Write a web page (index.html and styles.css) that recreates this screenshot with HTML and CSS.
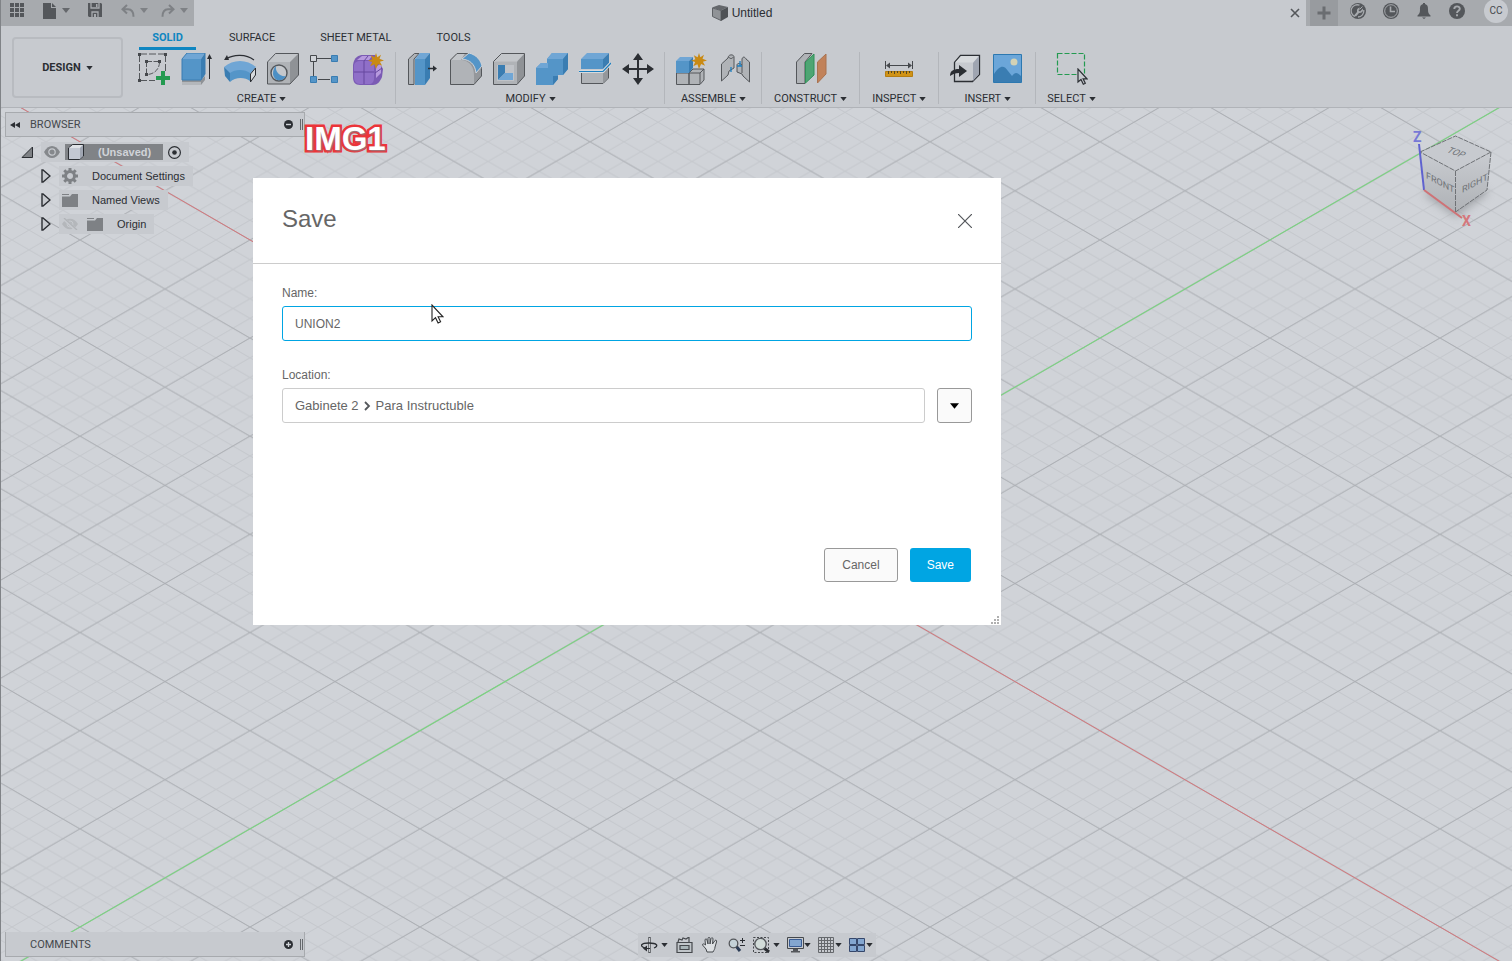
FILE: index.html
```html
<!DOCTYPE html>
<html lang="en">
  <head>
    <meta charset="UTF-8" />
    <meta name="viewport" content="width=device-width,initial-scale=1.0" />
    <title>Untitled</title>
    <link rel="stylesheet" href="styles.css">
  </head>
  <body>
    <!-- shared shapes -->
    <svg class="defs" aria-hidden="true">
      <symbol id="caret" viewBox="0 0 8 5"><path d="M0 0h8L4 5z" fill="currentColor"/></symbol>
      <symbol id="star" viewBox="0 0 16 16"><path d="M8 0l1.400 4.200 3.600-2.400-1.500 4L16 7.600l-4.100 1.200 2.200 4-4-1.800L8 16l-1.600-4.800-4.200 2 2-4.200L0 7.800l4.400-1.600-1.600-4 3.800 2z" fill="#c98a14"/></symbol>
      <symbol id="folder" viewBox="0 0 16 13"><path d="M0 0h7v1H0zM0 2.500h8L10 0h6v13H0z" fill="#7e8185"/></symbol>
      <symbol id="expand" viewBox="0 0 10 14"><path d="M1 1h1l7 6-7 6H1z" fill="#c7cacf" stroke="#2b2e33" stroke-width="1.400"/></symbol>
      <symbol id="pointer" viewBox="0 0 13 20"><path d="M1 1v16l3.500-3.300 2.600 5.300 2.500-1.200-2.500-5H12z" fill="#fff" stroke="#222" stroke-width="1.100"/></symbol>
      <symbol id="pointer-grey" viewBox="0 0 11 17"><path d="M1 1v13l3-2.500 2.300 4.700 2-1-2.200-4.400H10z" fill="#c7cacf" stroke="#2b2e33" stroke-width="1.200"/></symbol>
    </svg>

    <div class="app">
      <header>
        <div class="titlebar">
          <div class="quick">
            <button aria-label="Data panel"><svg width="15" height="15" viewBox="0 0 15 15" fill="#54575b"><path d="M0 0h4v4H0zM5 0h4v4H5zM10 0h4v4h-4zM0 5h4v4H0zM5 5h4v4H5zM10 5h4v4h-4zM0 10h4v4H0zM5 10h4v4H5zM10 10h4v4h-4z"/></svg></button>
            <button class="with-caret" aria-label="File">
              <svg width="14" height="16" viewBox="0 0 14 16" fill="#54575b"><path d="M0 0h8v5h5v11H0zM9 0l4 4H9z"/></svg>
              <svg class="caret"><use href="#caret"/></svg>
            </button>
            <button aria-label="Save file"><svg width="15" height="15" viewBox="0 0 15 15"><path d="M0 0h13l1 1v13H1l-1-1z" fill="#54575b"/><path d="M3 0v5h8V0M4 14V9h6v5" fill="none" stroke="#a7aaae" stroke-width="1.300"/><path d="M6 11h2v3H6zM8 1h1.500v3H8z" fill="#a7aaae"/></svg></button>
            <div class="history">
              <button class="with-caret" aria-label="Undo">
                <svg width="14" height="14" viewBox="0 0 14 14" fill="none" stroke="#7e8185" stroke-width="2"><path d="M6 1L1.500 5.200 6 9.500M2 5.200h5c3.500 0 5.500 2 5.500 7.500"/></svg>
                <svg class="caret"><use href="#caret"/></svg>
              </button>
              <button class="with-caret" aria-label="Redo">
                <svg width="14" height="14" viewBox="0 0 14 14" fill="none" stroke="#7e8185" stroke-width="2"><path d="M8 1l4.500 4.200L8 9.500M12 5.200H7c-3.500 0-5.500 2-5.500 7.500"/></svg>
                <svg class="caret"><use href="#caret"/></svg>
              </button>
            </div>
          </div>
          <div class="doc-tab">
            <h1>
              <svg width="16" height="16" viewBox="0 0 16 16"><path d="M0 2.500L7 0l9 2-7 3.500z" fill="#65686c"/><path d="M.5 3L9 5.500v10l-8.500-4z" fill="#909397" stroke="#5f6266"/><path d="M9 5.500L16 2v10l-7 4z" fill="#4e5155"/></svg>
              Untitled
            </h1>
            <button aria-label="Close tab"><svg width="10" height="10" viewBox="0 0 10 10" stroke="#54575b" stroke-width="1.600"><path d="M1 1l8 8M9 1L1 9"/></svg></button>
          </div>
          <div class="account">
            <button class="new-tab" aria-label="New tab"><svg width="14" height="14" viewBox="0 0 14 14" fill="#6a6d71"><path d="M5.500 0.500h3v5H13.500v3H8.500v5h-3v-5H0.500v-3h5z"/></svg></button>
            <button aria-label="Extensions"><svg width="16" height="16" viewBox="0 0 16 16"><circle cx="8" cy="8" r="8" fill="#54575b"/><path d="M5 13.500a6 6 0 1 1 4.500-11.300M13.700 7A6 6 0 0 1 8 14" fill="none" stroke="#a7aaae" stroke-width="1.300"/><path d="M4 12.500l3-3.500c-.5-3 1-4 3-4.500L8.500 7.500l1.500 1L13 5.500c.5 3-1 4.500-4 4.500l-3 3.500z" fill="#a7aaae"/><path d="M9.500 6.500l3-3" stroke="#a7aaae"/></svg></button>
            <button aria-label="Job status"><svg width="16" height="16" viewBox="0 0 16 16"><circle cx="8" cy="8" r="8" fill="#54575b"/><circle cx="8" cy="8" r="6.300" fill="none" stroke="#a7aaae"/><path d="M7.500 3.500v5h4.500" fill="none" stroke="#a7aaae" stroke-width="1.600"/></svg></button>
            <button aria-label="Notifications"><svg width="16" height="16" viewBox="0 0 16 16" fill="#54575b"><path d="M7 0h2v1c3 1 3 3 3 5.500 0 3 .5 4.500 2.500 6v1h-13v-1C3.500 11 4 9.500 4 6.500 4 4 4 2 7 1zM6 14.500h4L8 16z"/></svg></button>
            <button aria-label="Help"><svg width="16" height="16" viewBox="0 0 16 16"><circle cx="8" cy="8" r="8" fill="#54575b"/><path d="M5.300 6c0-3.500 5.500-3.500 5.500-.2C10.800 7.800 8 7.800 8 10M8 11.200v2" fill="none" stroke="#a7aaae" stroke-width="1.900"/></svg></button>
            <button class="avatar">CC</button>
          </div>
        </div>

        <div class="ribbon">
          <button class="workspace-btn">DESIGN <svg class="caret small"><use href="#caret"/></svg></button>
          <div class="ribbon-body">
            <nav class="tabs">
              <a href="#" class="active">SOLID</a>
              <a href="#">SURFACE</a>
              <a href="#">SHEET METAL</a>
              <a href="#">TOOLS</a>
            </nav>
            <div class="groups">
              <section class="group">
                <div class="icons">
                  <button aria-label="Create Sketch"><svg viewBox="0 0 32 32"><path d="M2 1h25M1.500 2v25M27.500 2v16M2 27.500h15" fill="none" stroke="#54575b" stroke-dasharray="7 2"/><path d="M9 8.500h12M8.500 9v13M21.500 9c0 7-5 12-12 12.500" fill="none" stroke="#54575b" stroke-dasharray="5 1.500"/><path d="M0 0h3v3H0zM26 0h3v3h-3zM0 26h3v3H0zM7 7h3v3H7zM20 7h3v3h-3zM7 20h3v3H7z" fill="#45484c"/><path d="M23 18h4v5h5v4h-5v5h-4v-5h-5v-4h5z" fill="#239a50"/></svg></button>
                  <button aria-label="Extrude"><svg viewBox="0 0 32 32"><path d="M1 27h19l4-4v4l-4 5H1z" fill="#8f9296"/><path d="M1 29h19v3H1z" fill="#b4b7bb"/><path d="M1 6l5-6h18l-4 6z" fill="#70a6d5"/><path d="M20 6l4-6v21l-4 6z" fill="#3a7db2"/><path d="M1 6h19v21H1z" fill="#5495c8"/><path d="M1 6l5-6h18v21l-4 6H1z" fill="none" stroke="#3a7db2"/><path d="M28.500 3v23" stroke="#2b2e33"/><path d="M26 6l2.500-5L31 6z" fill="#2b2e33"/></svg></button>
                  <button aria-label="Revolve"><svg viewBox="0 0 32 32"><path d="M0 14c9-8 23-8 32 0l-6 7c-6-4-14-4-20 0z" fill="#70a6d5"/><path d="M0 14l6 6v9l-5-6z" fill="#3a7db2"/><path d="M6 20c5-4 15-4 20 0v8c-5-4-15-4-20 1z" fill="#5495c8"/><path d="M26.500 21l5-6v7l-5 7z" fill="#d7dadd" stroke="#2b2e33"/><path d="M2 6c8-5 20-5 28 1" fill="none" stroke="#2b2e33" stroke-width="1.200"/><path d="M0 7l3-5 2 5z" fill="#2b2e33"/></svg></button>
                  <button aria-label="Hole"><svg viewBox="0 0 32 32"><path d="M.5 9l8-8.500h23L23 9z" fill="#c3c6ca"/><path d="M23 9l8.500-8.500V22L23 31z" fill="#8f9296"/><path d="M.5 9H23v22H.5z" fill="#b0b3b7"/><path d="M.5 9l8-8.500h23V22L23 31H.5z" fill="none" stroke="#54575b"/><circle cx="12" cy="20" r="8" fill="#c5c8cc" stroke="#54575b" stroke-width="1.400"/><path d="M9 13c-1 6 4 11 10 10-3 6-12 6-13-2 0-4 1-6 3-8z" fill="#4c8fc4"/></svg></button>
                  <button aria-label="Rectangular Pattern"><svg viewBox="0 0 32 32"><path d="M7 5.500h14M3.500 9v14M8 26.500h12" stroke="#45484c"/><path d="M.5 2.500h6v6h-6z" fill="#d0d3d8" stroke="#45484c"/><path d="M21.500 2.500h6v6h-6zM.5 23.500h6v6h-6zM21.500 23.500h6v6h-6z" fill="#5495c8" stroke="#3a7db2"/></svg></button>
                  <button aria-label="Create Form"><svg viewBox="0 0 32 32"><path d="M0 12C1 4 6 2 10 2h12l8 14-1 8c-2 5-5 8-9 8H7c-5 0-7-3-7-8z" fill="#7b5bb4"/><path d="M1 12c1-3 3-4 6-4h10c3 0 4 3 4 6v11c0 4-2 6-5 6H7c-4 0-6-3-6-7z" fill="#8f6fc8"/><path d="M4 7l5-4h10l-3 4zM23 14l5-4v10l-5 5z" fill="#b79ade"/><path d="M11 8v23M1 19h20M11 8l4-5M22 20l7-5" fill="none" stroke="#67489f"/><use href="#star" x="15" y="0" width="16" height="16"/></svg></button>
                </div>
                <button class="group-name">CREATE <svg class="caret small"><use href="#caret"/></svg></button>
              </section>
              <section class="group">
                <div class="icons">
                  <button aria-label="Press Pull"><svg viewBox="0 0 32 32"><path d="M1.500 6l6-5.500H12L7 6v25.500H1.500z" fill="#b0b3b7" stroke="#54575b"/><path d="M8 6l5-6h10l-5 6z" fill="#70a6d5"/><path d="M18 6l5-6v25l-5 7z" fill="#3a7db2"/><path d="M8 6h10v26H8z" fill="#5495c8"/><path d="M21 15.500h6" stroke="#2b2e33" stroke-width="1.500"/><path d="M26 12.500l4 3-4 3z" fill="#2b2e33"/></svg></button>
                  <button aria-label="Fillet"><svg viewBox="0 0 32 32"><path d="M.5 7L7 .5h10c8 1 14 7 14.500 15V23L24 31.500H.5z" fill="#94979b"/><path d="M.5 7H12c8 1 12 7 12 16v8.500H.5z" fill="#b0b3b7"/><path d="M1 7l6-6.500h8L11 7z" fill="#c3c6ca"/><path d="M.5 7L7 .5h10c8 1 14 7 14.500 15V23L24 31.500H.5z" fill="none" stroke="#54575b"/><path d="M12 6l7-6c8 2 12 8 13 13l-6 7C25 11 20 7 12 6z" fill="#5495c8" stroke="#d0d3d8"/></svg></button>
                  <button aria-label="Shell"><svg viewBox="0 0 32 32"><path d="M.5 8.500l8-8h23L24 8.500z" fill="#c3c6ca"/><path d="M24 8.500l7.500-8V23L24 31.500z" fill="#8f9296"/><path d="M.5 8.500H24v23H.5z" fill="#b0b3b7"/><path d="M.5 8.500l8-8h23V23L24 31.500H.5z" fill="none" stroke="#54575b"/><path d="M4 12h17v16H4z" fill="#c0c3c8"/><path d="M5 12h7v8l-7 7z" fill="#3a7db2"/><path d="M5 27l7-7h8v7z" fill="#70a6d5"/></svg></button>
                  <button aria-label="Combine"><svg viewBox="0 0 32 32"><path d="M0 15l5-5h6V6l5-6h16v16l-5 6h-5v4l-5 6H0z" fill="#5495c8"/><path d="M11 6l5-6h16l-5 6zM0 15l5-5h7v5z" fill="#70a6d5"/><path d="M27 6l5-6v16l-5 6zM17 23h5v3l-5 6z" fill="#3a7db2"/></svg></button>
                  <button aria-label="Split Body"><svg viewBox="0 0 32 32"><path d="M2.500 19.500H24l5.500-5V25L24 30.500H2.500z" fill="#b0b3b7" stroke="#54575b"/><path d="M24 20l5-5v10l-5 5z" fill="#94979b"/><path d="M2 6l6-6h22l-6 6z" fill="#70a6d5"/><path d="M24 6l6-6v10l-6 6z" fill="#3a7db2"/><path d="M2 6h22v10H2z" fill="#5495c8"/><path d="M0 18.500h24L32 10" fill="none" stroke="#d7dadd" stroke-width="3"/><path d="M0 18.500h24L32 10" fill="none" stroke="#1c7fc0" stroke-width="1.200"/></svg></button>
                  <button aria-label="Move/Copy"><svg viewBox="0 0 32 32" fill="#2b2e33"><path d="M16 0l5 7h-4v8h8v-4l7 5-7 5v-4h-8v8h4l-5 7-5-7h4v-8H7v4l-7-5 7-5v4h8V7h-4z"/></svg></button>
                </div>
                <button class="group-name">MODIFY <svg class="caret small"><use href="#caret"/></svg></button>
              </section>
              <section class="group">
                <div class="icons">
                  <button aria-label="New Component"><svg viewBox="0 0 32 32"><path d="M.5 20H13v11.500H.5zM13 20l4-4h11v11l-4 4.500H13z" fill="#b0b3b7" stroke="#54575b"/><path d="M13 20h11v11M24 20l4-4" fill="none" stroke="#54575b"/><path d="M0 8l4-4h13L13 8z" fill="#70a6d5"/><path d="M13 8l4-4v11l-4 5z" fill="#3a7db2"/><path d="M0 8h13v12H0z" fill="#5495c8"/><use href="#star" x="15" y="0" width="16" height="16"/></svg></button>
                  <button aria-label="Joint"><svg viewBox="0 0 32 32"><path d="M2.500 11L9 5c0-4 6-4 6-1v11l-5 3-1 4-6.500 6zM30.500 29L24 23l-1-2-5-2v-7c0-2 3-2 5 0V6c1-3 3-2 4 0l3.500 3z" fill="#b0b3b7" stroke="#54575b"/><path d="M10 4c0 2 4 2 4 0M23 12v8" fill="none" stroke="#54575b"/><path d="M12 14v5M21 8v5M18 13h5" stroke="#1c7fc0" stroke-width="1.300"/></svg></button>
                </div>
                <button class="group-name">ASSEMBLE <svg class="caret small"><use href="#caret"/></svg></button>
              </section>
              <section class="group single">
                <div class="icons">
                  <button aria-label="Offset Plane"><svg viewBox="0 0 32 32"><path d="M1.500 9l8-8.500H17L10 9v21.500H1.500z" fill="#b0b3b7" stroke="#54575b"/><path d="M10.500 9L19 1v21l-8.500 8z" fill="#4ea573" stroke="#2f9158"/><path d="M22.500 9L31 1v20l-8.500 9z" fill="#c1825a" stroke="#a97250"/></svg></button>
                </div>
                <button class="group-name">CONSTRUCT <svg class="caret small"><use href="#caret"/></svg></button>
              </section>
              <section class="group single">
                <div class="icons">
                  <button aria-label="Measure"><svg viewBox="0 0 32 32"><path d="M2.500 8v8M29.500 8v8M4 12.500h24" stroke="#45484c"/><path d="M3 12.500l4-3v6zM29 12.500l-4-3v6z" fill="#45484c"/><path d="M2.500 18.500h27v5h-27z" fill="#d09316" stroke="#b57d10"/><path d="M5.500 18v3M8.500 18v2M11.500 18v3M14.500 18v2M17.500 18v3M20.500 18v2M23.500 18v3M26.500 18v2" stroke="#54471f"/></svg></button>
                </div>
                <button class="group-name">INSPECT <svg class="caret small"><use href="#caret"/></svg></button>
              </section>
              <section class="group">
                <div class="icons">
                  <button aria-label="Insert Derive"><svg viewBox="0 0 32 32"><path d="M4.500 9.500l6-7h19v19l-7 7h-18z" fill="#c7cacf" stroke="#2b2e33" stroke-width="1.300"/><path d="M5 9.500l6-6.500h18l-6 6.500z" fill="#d7dadd"/><path d="M23 10l6-7v18l-6 7z" fill="#9fa5b1"/><path d="M0 23c0-5 3-7 9-7v-4l8 6-8 6v-4c-4 0-6 1-9 3z" fill="#2b2e33"/></svg></button>
                  <button aria-label="Decal"><svg viewBox="0 0 32 32"><path d="M.5 1.500h28v28H.5z" fill="#6ba6d9" stroke="#2c78b0"/><path d="M1 21c6-9 10-9 14-3l4 5c3-4 5-4 9 0v6H1z" fill="#3a7db2"/><circle cx="21" cy="9" r="3.500" fill="#d3d2b5"/></svg></button>
                </div>
                <button class="group-name">INSERT <svg class="caret small"><use href="#caret"/></svg></button>
              </section>
              <section class="group">
                <div class="icons">
                  <button aria-label="Select"><svg viewBox="0 0 32 32"><path d="M1.500.500h27v21h-27z" fill="none" stroke="#239a50" stroke-width="1.200" stroke-dasharray="5 2"/><use href="#pointer-grey" x="21" y="15" width="11" height="17"/></svg></button>
                </div>
                <button class="group-name">SELECT <svg class="caret small"><use href="#caret"/></svg></button>
              </section>
            </div>
          </div>
        </div>
      </header>

      <main>
        <svg class="canvas" aria-hidden="true">
          <defs>
            <!-- one cell of the isometric ground grid, five steps a side -->
            <pattern id="grid" patternUnits="userSpaceOnUse" x="79" y="33.770" width="170" height="98.150">
              <g fill="none" stroke="#c5c8cd" stroke-width="1">
                <path d="M-34 -19.630L204 117.780M0 -19.630L204 98.150M34 -19.630L204 78.520M68 -19.630L204 58.890M102 -19.630L204 39.260M136 -19.630L204 19.630M-34 0L170 117.780M-34 19.630L136 117.780M-34 39.260L102 117.780M-34 58.890L68 117.780M-34 78.520L34 117.780"/>
                <path d="M204 -19.630L-34 117.780M170 -19.630L-34 98.150M136 -19.630L-34 78.520M102 -19.630L-34 58.890M68 -19.630L-34 39.260M34 -19.630L-34 19.630M204 0L0 117.780M204 19.630L34 117.780M204 39.260L68 117.780M204 58.890L102 117.780M204 78.520L136 117.780"/>
              </g>
              <path d="M-34 -19.630L204 117.780M204 -19.630L-34 117.780" fill="none" stroke="#abaeb3" stroke-width="1"/>
            </pattern>
          </defs>
          <rect width="100%" height="100%" fill="url(#grid)"/>
          <path d="M-1 -12.400L2999 1719.700" stroke="#d5777c" stroke-width="1"/>
          <path d="M-1 865.200L1999 -289.500" stroke="#7bd480" stroke-width="1.100"/>
        </svg>

        <aside class="browser">
          <div class="panel-bar">
            <svg width="10" height="6" viewBox="0 0 10 6" fill="#2b2e33"><path d="M5 0v6L0 3zM10 0v6L5 3z"/></svg>
            <span>BROWSER</span>
            <button aria-label="Collapse browser"><svg width="9" height="9" viewBox="0 0 9 9"><circle cx="4.500" cy="4.500" r="4.500" fill="#2b2e33"/><path d="M2 4.500h5" stroke="#d0d3d8" stroke-width="1.400"/></svg></button>
            <i class="grip"></i>
          </div>
          <ul class="tree">
            <li class="root">
              <svg width="12" height="12" viewBox="0 0 12 12"><path d="M1 11.500L11.500 1v10.500z" fill="#7e8185" stroke="#2b2e33"/></svg>
              <div class="chip">
                <svg width="16" height="12" viewBox="0 0 16 12"><path d="M0 6c4-8 12-8 16 0-4 8-12 8-16 0z" fill="#85888c"/><circle cx="8" cy="6" r="3.200" fill="none" stroke="#c7cacf" stroke-width="1.200"/></svg>
                <strong>
                  <svg width="16" height="16" viewBox="0 0 16 16"><path d="M.5 4l4-3.500h11V12l-4 3.500H.5z" fill="#c3c8d2" stroke="#2b2e33"/><path d="M1 4l4-3h10l-3 3z" fill="#dfe2e6"/><path d="M12 4l3-3v11l-3 3z" fill="#a0a6b2"/></svg>
                  (Unsaved)
                </strong>
                <svg width="13" height="13" viewBox="0 0 13 13"><circle cx="6.500" cy="6.500" r="5.900" fill="none" stroke="#2b2e33" stroke-width="1.200"/><circle cx="6.500" cy="6.500" r="2.300" fill="#2b2e33"/></svg>
              </div>
            </li>
            <li>
              <svg width="10" height="14"><use href="#expand"/></svg>
              <div class="chip">
                <svg width="16" height="16" viewBox="0 0 16 16"><circle cx="8" cy="8" r="4.500" fill="none" stroke="#7e8185" stroke-width="3"/><path d="M8 0v3M8 13v3M0 8h3M13 8h3M2.300 2.300l2.200 2.200M11.500 11.500l2.200 2.200M13.700 2.300l-2.200 2.200M4.500 11.500l-2.200 2.200" stroke="#7e8185" stroke-width="3"/></svg>
                <span>Document Settings</span>
              </div>
            </li>
            <li>
              <svg width="10" height="14"><use href="#expand"/></svg>
              <div class="chip">
                <svg width="16" height="13"><use href="#folder"/></svg>
                <span>Named Views</span>
              </div>
            </li>
            <li>
              <svg width="10" height="14"><use href="#expand"/></svg>
              <div class="chip hidden-item">
                <svg width="16" height="12" viewBox="0 0 16 12"><path d="M0 6c4-7 12-7 16 0-4 7-12 7-16 0z" fill="#b4b7bb"/><circle cx="8" cy="6" r="3" fill="none" stroke="#c7cacf"/><path d="M1 0l13 12" stroke="#c7cacf" stroke-width="3"/><path d="M2 0l13 12" stroke="#b0b3b7" stroke-width="1.300"/></svg>
                <svg width="16" height="13"><use href="#folder"/></svg>
                <span>Origin</span>
              </div>
            </li>
          </ul>
        </aside>

        <p class="stamp">IMG1</p>

        <svg class="viewcube" width="86" height="106" viewBox="0 0 86 106">
          <defs>
            <filter id="soft" x="-50%" y="-50%" width="200%" height="200%"><feGaussianBlur stdDeviation="4"/></filter>
            <linearGradient id="side" x1="0" y1="0" x2="0" y2="1"><stop offset="0" stop-color="#c9ccd1"/><stop offset="1" stop-color="#afb2b6"/></linearGradient>
          </defs>
          <path d="M14 66l33-14 34 12-34 25z" fill="#85888c" opacity=".6" filter="url(#soft)"/>
          <path d="M11 24L46.500 8 82 24 46.500 43z" fill="#c7cacf"/>
          <path d="M11 24l35.500 19v41L15 62z" fill="url(#side)"/>
          <path d="M82 24L46.500 43v41L78 62z" fill="url(#side)"/>
          <path d="M11 24L46.500 8 82 24 46.500 43zM46.500 43v41M82 24l-4 38-31.500 22" fill="none" stroke="#6f7276" stroke-dasharray="5 1"/>
          <path d="M10 16l5 46" stroke="#5f62cf" stroke-width="2"/>
          <path d="M15 62l38 28" stroke="#cf7276" stroke-width="2"/>
          <text x="4" y="14" class="axis-z">Z</text>
          <text x="53" y="98" class="axis-x">X</text>
          <text class="face" transform="translate(17 50) skewY(28)">FRONT</text>
          <text class="face" transform="translate(53 65) skewY(-28)">RIGHT</text>
          <text class="face" transform="translate(37 24) rotate(20) skewX(-25)">TOP</text>
        </svg>

        <dialog open aria-labelledby="dialog-title">
          <form>
            <div class="dialog-head">
              <h2 id="dialog-title">Save</h2>
              <button type="button" class="close" aria-label="Close"><svg width="14" height="14" viewBox="0 0 14 14" stroke="#54575b" stroke-width="1.200"><path d="M0 0l14 14M14 0L0 14"/></svg></button>
            </div>
            <div class="dialog-body">
              <label for="name">Name:</label>
              <input type="text" id="name" name="name" value="UNION2">
              <label for="location">Location:</label>
              <div class="location">
                <output id="location">Gabinete 2 <svg width="7" height="10" viewBox="0 0 7 10" fill="none" stroke="#54575b" stroke-width="1.800"><path d="M1 1l4 4-4 4"/></svg> Para Instructuble</output>
                <button type="button" class="drop" aria-label="Choose location"><svg width="9" height="6"><use href="#caret"/></svg></button>
              </div>
              <div class="buttons">
                <button type="button" class="cancel">Cancel</button>
                <button type="submit" class="save">Save</button>
              </div>
            </div>
          </form>
          <svg class="resize" width="9" height="9" viewBox="0 0 9 9" fill="#b0b0b0"><path d="M6 0h2v2H6zM3 3h2v2H3zM6 3h2v2H6zM0 6h2v2H0zM3 6h2v2H3zM6 6h2v2H6z"/></svg>
        </dialog>
        <svg class="mouse" width="13" height="20" aria-hidden="true"><use href="#pointer"/></svg>

        <div class="panel-bar comments">
          <span>COMMENTS</span>
          <button aria-label="Add comment"><svg width="9" height="9" viewBox="0 0 9 9"><circle cx="4.500" cy="4.500" r="4.500" fill="#2b2e33"/><path d="M2 4.500h5M4.500 2v5" stroke="#d0d3d8" stroke-width="1.300"/></svg></button>
          <i class="grip"></i>
        </div>

        <div class="navbar">
          <button aria-label="Orbit"><svg width="17" height="16" viewBox="0 0 17 16"><path d="M8.500 0v16" stroke="#54575b" stroke-width="2.500"/><path d="M8.500 1v14" stroke="#c7cacf"/><path d="M4 11C-2 9 0 6 8 6s10 3 5 5" fill="none" stroke="#2b2e33" stroke-width="1.300"/><path d="M2 11.500l4-3v6zM6 11h3v1H6z" fill="#2b2e33"/></svg><svg class="caret small"><use href="#caret"/></svg></button>
          <button class="plain" aria-label="Look At"><svg width="17" height="16" viewBox="0 0 17 16" fill="none" stroke="#45484c" stroke-width="1.200"><path d="M1 5.500h15v10H1z" fill="#c0c5c9"/><path d="M4 8.500h9v4H4z" fill="#a9b5b8"/><path d="M2 5l1-3 3 1 1-2 3 1 3-2v5"/></svg></button>
          <button class="plain" aria-label="Pan"><svg width="17" height="16" viewBox="0 0 17 16"><path d="M5 15l-1-3-3.500-4c0-1.500 1.500-1.500 3 0L3 3c0-1.500 2-1.500 2 0l1 4V1.500c0-1.500 2-1.500 2 0V7l1-5.500c.5-1.200 2-1 2 .5L10.500 7 13 3.500c1-.8 2 0 1.500 1.500L13 10c0 2-1 3-2 5z" fill="#dde0e3" stroke="#45484c"/></svg></button>
          <button class="plain" aria-label="Zoom"><svg width="17" height="16" viewBox="0 0 17 16"><path d="M8 9l4 5" stroke="#2b3c55" stroke-width="3"/><circle cx="5.500" cy="6.500" r="4.300" fill="#c5d2d8" stroke="#54575b" stroke-width="1.300"/><path d="M14.500 1v5M12 3.500h5M12 8.500h5" stroke="#2b2e33"/></svg></button>
          <button aria-label="Zoom window"><svg width="17" height="16" viewBox="0 0 17 16"><path d="M.5.500h15v15H.5z" fill="none" stroke="#45484c" stroke-dasharray="2 1.500"/><path d="M11 11l5 4" stroke="#2b2e33" stroke-width="3"/><circle cx="7.500" cy="7" r="5.700" fill="#d2dcd9" stroke="#54575b" stroke-width="1.300"/></svg><svg class="caret small"><use href="#caret"/></svg></button>
          <button class="tight" aria-label="Display settings"><svg width="17" height="16" viewBox="0 0 17 16"><path d="M.5.500h16v11H.5z" fill="#c7cacf" stroke="#45484c"/><path d="M2.500 2.500h12v7h-12z" fill="#83a6d0" stroke="#395c94"/><path d="M6 12h5v2h2v1.500H4V14h2z" fill="#54575b"/></svg><svg class="caret small"><use href="#caret"/></svg></button>
          <button class="tight" aria-label="Grid and snaps"><svg width="17" height="16" viewBox="0 0 17 16" fill="none" stroke="#65686c"><path d="M.5.500h15v15H.5zM3.500 0v16M6.500 0v16M9.500 0v16M12.500 0v16M0 3.500h16M0 6.500h16M0 9.500h16M0 12.500h16"/></svg><svg class="caret small"><use href="#caret"/></svg></button>
          <button class="tight" aria-label="Viewports"><svg width="17" height="16" viewBox="0 0 17 16" fill="#83a6d0" stroke="#35476b"><path d="M.5 1.500h7v6h-7zM8.500 1.500h7v6h-7zM.5 8.500h7v6h-7zM8.500 8.500h7v6h-7z"/></svg><svg class="caret small"><use href="#caret"/></svg></button>
        </div>
      </main>
    </div>
  </body>
</html>
```
FILE: styles.css
```css
* {
  box-sizing: border-box;
}
body {
  margin: 0;
  font-family: "Liberation Sans", Arial, sans-serif;
  font-size: 12px;
  color: #2b2e33;
}
button {
  display: flex;
  align-items: center;
  justify-content: center;
  padding: 0;
  border: none;
  background: none;
  font-family: inherit;
  font-size: inherit;
  color: inherit;
  cursor: pointer;
}
svg {
  display: block;
  flex: none;
}
.defs {
  position: absolute;
  width: 0;
  height: 0;
}
.app {
  display: flex;
  flex-direction: column;
  height: 100vh;
  border-left: 1px solid #808387;
  overflow: hidden;
}
.caret {
  width: 8px;
  height: 5px;
}
.caret.small {
  width: 7px;
  height: 4px;
}

/* title bar */
header {
  background: #c7cacf;
  border-bottom: 1px solid #b0b3b8;
}
.titlebar {
  display: flex;
  height: 26px;
}
.quick, .account {
  display: flex;
  align-items: center;
  background: #a7aaae;
  color: #65686c;
  padding-bottom: 5px;
}
.quick {
  gap: 18px;
  padding-left: 9px;
  padding-right: 6px;
}
.history {
  display: flex;
  gap: 13px;
  color: #7e8185;
}
.with-caret {
  gap: 5px;
}
.doc-tab {
  flex: 1;
  display: flex;
  align-items: center;
  padding-right: 6px;
}
.doc-tab h1 {
  flex: 1;
  display: flex;
  align-items: center;
  justify-content: center;
  gap: 4px;
  margin: 0;
  font-size: 12px;
  font-weight: normal;
}
.account {
  gap: 17px;
  padding-left: 4px;
  padding-right: 4px;
}
.new-tab {
  width: 28px;
  height: 26px;
  margin-right: -5px;
  margin-bottom: -5px;
  background: #989b9f;
}
.avatar {
  width: 24px;
  height: 24px;
  border-radius: 50%;
  background: #c7cacf;
  margin-left: 2px;
  font-family: Roboto, sans-serif;
  font-size: 10px;
  color: #45484c;
}

/* ribbon */
.ribbon {
  display: flex;
  height: 81px;
  padding: 0 11px;
  gap: 15px;
  font-family: Roboto, sans-serif;
  font-size: 11px;
}
.workspace-btn {
  width: 111px;
  height: 61px;
  margin-top: 11px;
  gap: 5px;
  border: 2px solid #b8bbc0;
  border-radius: 4px;
  font-weight: bold;
}
.tabs {
  display: flex;
  gap: 33px;
  height: 24px;
}
.tabs a {
  color: #2b2e33;
  text-decoration: none;
  line-height: 24px;
}
.tabs .active {
  color: #0f86c1;
  font-weight: bold;
  width: 57px;
  margin-left: 1px;
  text-align: center;
  border-bottom: 3px solid #0f86c1;
}
.tabs a + a {
  margin-right: 12px;
}
.groups {
  display: flex;
  padding-top: 2px;
}
.group {
  display: flex;
  flex-direction: column;
  align-items: center;
  height: 52px;
  padding: 1px 10px 0 11px;
  border-right: 1px solid #b3b6bb;
}
.group:first-child {
  padding-left: 0;
}
.group:last-child {
  border-right: none;
}
.group.single {
  padding: 1px 12px 0;
}
.icons {
  display: flex;
  gap: 11px;
}
.icons svg {
  width: 32px;
  height: 32px;
}
.group-name {
  gap: 3px;
  height: 14px;
  margin-top: 7px;
}

/* workspace */
main {
  position: relative;
  flex: 1;
  background: #d0d3d8;
}
.canvas {
  position: absolute;
  width: 100%;
  height: 100%;
}
.browser {
  position: absolute;
  top: 4px;
  left: 4px;
}
.panel-bar {
  display: flex;
  align-items: center;
  width: 300px;
  height: 25px;
  padding-left: 4px;
  padding-right: 1px;
  border: 1px solid #a7aaae;
  background: #c7cacf;
  font-family: Roboto, sans-serif;
  font-size: 11px;
  color: #45484c;
}
.panel-bar span {
  flex: 1;
  margin-left: 10px;
}
.grip {
  width: 3px;
  height: 11px;
  margin-left: 7px;
  border: 1px solid #65686c;
  border-width: 0 1px;
}
.comments {
  position: absolute;
  left: 4px;
  bottom: 4px;
  border-top: none;
}
.comments span {
  margin-left: 20px;
}
.tree {
  margin: 0;
  padding: 3px 0 0;
  list-style: none;
  font-size: 11px;
}
.tree li {
  display: flex;
  align-items: center;
  gap: 8px;
  height: 24px;
  padding-left: 36px;
}
.tree .root {
  padding-left: 16px;
}
.chip {
  display: flex;
  align-items: center;
  gap: 14px;
  height: 20px;
  padding: 0 8px 0 3px;
  background: #c7cacf;
}
.root .chip {
  gap: 5px;
}
.hidden-item {
  gap: 9px;
}
.hidden-item span {
  margin-left: 5px;
}
.chip strong {
  display: flex;
  align-items: center;
  gap: 14px;
  height: 16px;
  padding: 0 12px 0 3px;
  background: #808387;
  color: #d0d3d8;
}
.stamp {
  position: absolute;
  left: 304px;
  top: 11px;
  margin: 0;
  font-size: 33px;
  line-height: 40px;
  font-weight: bold;
  color: #fff;
  -webkit-text-stroke: 5px #ee3338;
  paint-order: stroke fill;
  text-shadow: 1px 1px 2px #85888c;
}
.viewcube {
  position: absolute;
  top: 20px;
  right: 17px;
}
.viewcube text {
  font-family: Roboto, sans-serif;
}
.viewcube .face {
  font-size: 9px;
  fill: #6f7276;
}
.axis-z, .axis-x {
  font-size: 14px;
  font-weight: bold;
  fill: #7779d6;
}
.axis-x {
  fill: #d5777c;
}

/* save dialog */
dialog {
  position: absolute;
  top: 70px;
  left: 252px;
  width: 748px;
  max-width: 80%;
  margin: 0;
  padding: 0;
  border: none;
  background: #fff;
  color: #666;
}
.dialog-head {
  display: flex;
  align-items: center;
  justify-content: space-between;
  height: 86px;
  padding: 0 29px;
  border-bottom: 1px solid #ccc;
}
.dialog-head h2 {
  margin: 0;
  padding-bottom: 4px;
  font-size: 24px;
  font-weight: normal;
}
.dialog-body {
  padding: 21px 29px 43px;
}
.dialog-body label {
  display: block;
  margin-bottom: 5px;
  line-height: 16px;
}
.dialog-body input {
  display: block;
  width: 100%;
  height: 35px;
  margin-bottom: 26px;
  padding: 0 12px;
  border: 1px solid #00a5e3;
  border-radius: 3px;
  outline: none;
  font-family: inherit;
  font-size: 12px;
  color: #666;
}
.location {
  display: flex;
  gap: 12px;
}
.location output {
  flex: 1;
  display: flex;
  align-items: center;
  gap: 5px;
  height: 35px;
  padding: 0 12px;
  border: 1px solid #ccc;
  border-radius: 3px;
  font-size: 13px;
}
.drop, .cancel {
  border: 1px solid #999;
  border-radius: 3px;
  background: #fafafa;
}
.drop {
  width: 35px;
  color: #000;
}
.buttons {
  display: flex;
  justify-content: flex-end;
  gap: 12px;
  margin-top: 125px;
  padding-right: 1px;
}
.buttons button {
  height: 34px;
  padding: 0 17px;
}
.save {
  border-radius: 3px;
  background: #00a5e3;
  color: #fff;
}
.resize {
  position: absolute;
  right: 1px;
  bottom: 0;
}
.mouse {
  position: absolute;
  left: 430px;
  top: 196px;
}

/* navigation bar */
.navbar {
  position: absolute;
  bottom: 4px;
  left: 50%;
  transform: translateX(-50%);
  display: flex;
  align-items: center;
  gap: 7px;
  height: 24px;
  padding: 0 3px;
  background: #c7cacf;
}
.navbar button {
  gap: 3px;
}
.navbar .plain {
  width: 19px;
}
.navbar .tight {
  gap: 0;
}
```
